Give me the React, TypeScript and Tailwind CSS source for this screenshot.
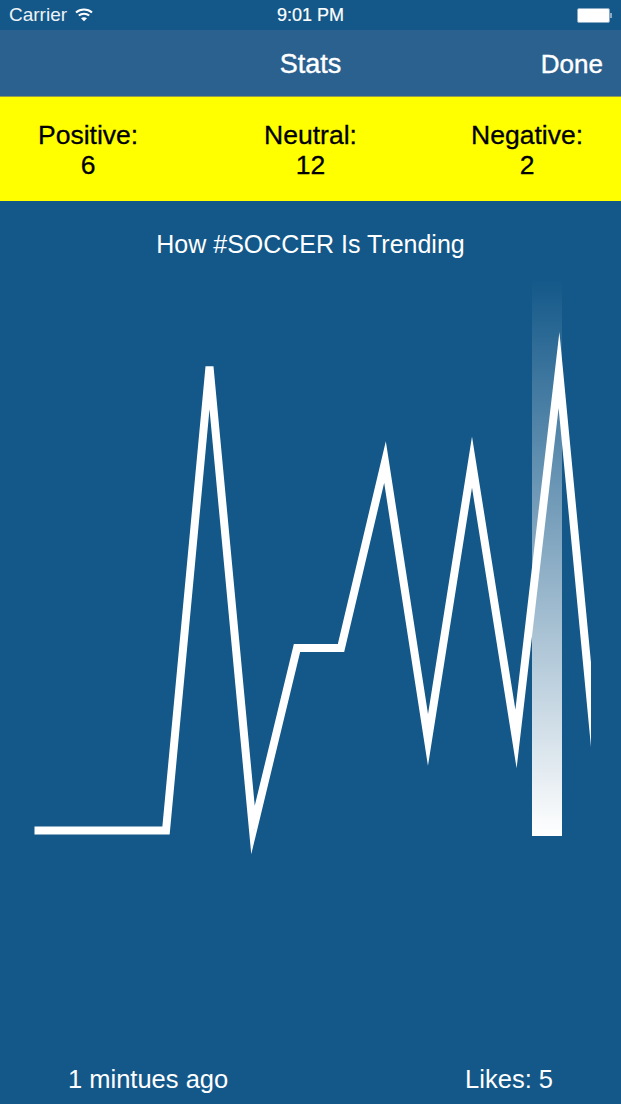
const font = { fontFamily: '"Liberation Sans", Arial, sans-serif' }

// chart points, in chart coordinates (chart box starts at x=30, y=278)
const points = [
  [4.5, 552.5],
  [136, 552.5],
  [179.5, 88.5],
  [223, 552],
  [267, 370],
  [311, 370],
  [355, 184],
  [398, 462],
  [442, 184],
  [486, 461],
  [529, 92],
  [573, 552.5],
]

const WifiIcon = () => (
  <svg width="18" height="14" viewBox="0 0 18 14" fill="none" stroke="white" strokeWidth="2">
    <path d="M1 4.6C5.5 0.6 12.5 0.6 17 4.6" />
    <path d="M3.8 7.6C6.8 5 11.2 5 14.2 7.6" />
    <path d="M9 13.2L6 10.2C7.7 8.8 10.3 8.8 12 10.2Z" fill="white" stroke="none" />
  </svg>
)

const Battery = () => (
  <div className="flex items-center">
    <div className="w-[33px] h-[15px] rounded-[2px] border border-[#8aa9c4] bg-white" />
    <div className="w-[2px] h-[5px] bg-[#8aa9c4]" />
  </div>
)

const Stat = ({ label, value, className }: { label: string; value: number; className: string }) => (
  <div className={`flex flex-col items-center pt-[2px] text-[26.5px] leading-[30px] text-black [-webkit-text-stroke:0.3px_black] ${className}`}>
    <span>{label}</span>
    <span>{value}</span>
  </div>
)

export default function App() {
  return (
    <div className="w-[621px] h-[1104px] flex flex-col bg-[#135889] text-white overflow-hidden" style={font}>
      {/* Status bar */}
      <div className="relative h-[30px] flex items-center justify-between pl-[9px] pr-[9px]">
        <div className="flex items-center gap-[8px] text-[19px] text-[#eef3f7]">
          <span>Carrier</span>
          <WifiIcon />
        </div>
        <span className="absolute left-0 right-0 text-center text-[18px] [-webkit-text-stroke:0.2px_white]">9:01 PM</span>
        <Battery />
      </div>

      {/* Nav bar */}
      <div className="relative h-[67px] flex items-center justify-end pr-[18px] pt-[2px] bg-[#2b618f] border-b border-[#8f9a4e] text-[26px] [-webkit-text-stroke:0.4px_white]">
        <span className="absolute left-0 right-0 text-center text-[27px]">Stats</span>
        <span>Done</span>
      </div>

      {/* Sentiment counts */}
      <div className="h-[104px] grid grid-cols-3 items-center bg-[#ffff00]">
        <Stat label="Positive:" value={6} className="justify-self-start ml-[38px]" />
        <Stat label="Neutral:" value={12} className="justify-self-center" />
        <Stat label="Negative:" value={2} className="justify-self-end mr-[38px]" />
      </div>

      <h1 className="mt-[28px] h-[30px] text-center text-[25px] leading-[30px]">How #SOCCER Is Trending</h1>

      {/* Trend chart */}
      <div className="relative mt-[19px] mx-[30px] h-[600px] overflow-hidden">
        <svg width="561" height="600" viewBox="0 0 561 600" fill="none">
          <polyline
            points={points.map((p) => p.join(',')).join(' ')}
            stroke="white"
            strokeWidth="8"
            strokeLinejoin="miter"
            strokeMiterlimit="10"
          />
        </svg>
        <div className="absolute left-[502px] top-0 w-[30px] h-[558px] bg-gradient-to-b from-white/0 to-white" />
      </div>

      {/* Footer */}
      <div className="mt-auto h-[50px] flex items-center justify-between px-[68px] text-[25.5px]">
        <span>1 mintues ago</span>
        <span>Likes: 5</span>
      </div>
    </div>
  )
}
